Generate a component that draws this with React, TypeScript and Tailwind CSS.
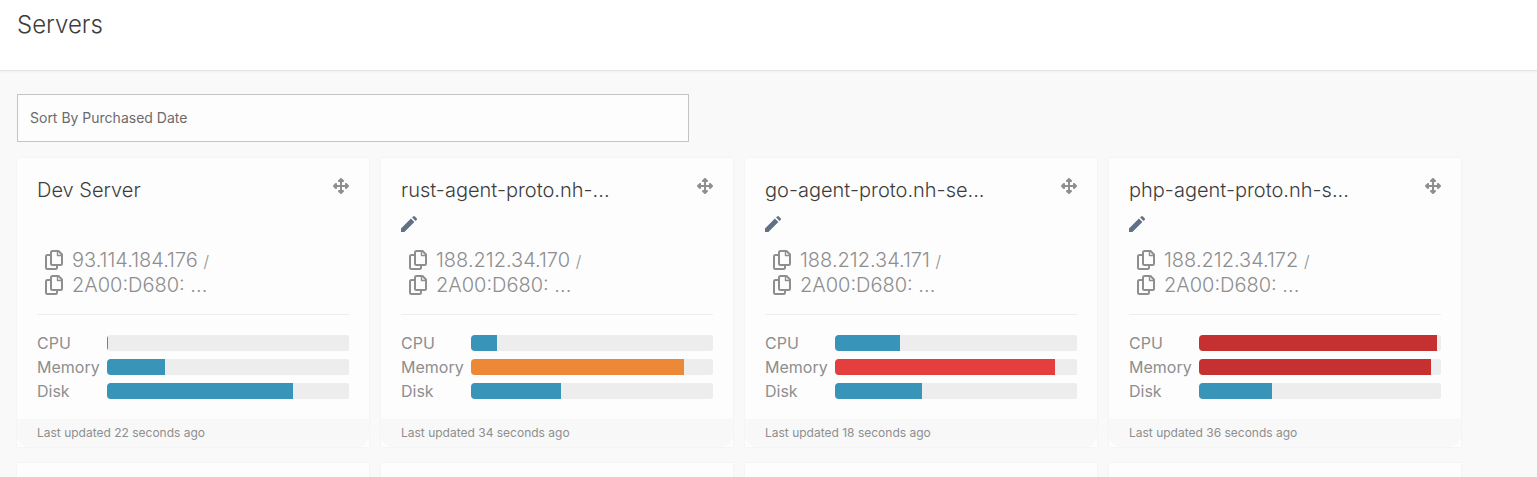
import { FaUpDownLeftRight } from "react-icons/fa6";

interface Server {
  name: string;
  editable: boolean;
  ipv4: string;
  ipv6: string;
  cpu: number;
  memory: number;
  disk: number;
  updated: number;
}

const servers: Server[] = [
  { name: "Dev Server", editable: false, ipv4: "93.114.184.176", ipv6: "2A00:D680: ...", cpu: 0.4, memory: 24, disk: 77, updated: 22 },
  { name: "rust-agent-proto.nh-...", editable: true, ipv4: "188.212.34.170", ipv6: "2A00:D680: ...", cpu: 10.7, memory: 88, disk: 37, updated: 34 },
  { name: "go-agent-proto.nh-se...", editable: true, ipv4: "188.212.34.171", ipv6: "2A00:D680: ...", cpu: 27, memory: 91, disk: 36, updated: 18 },
  { name: "php-agent-proto.nh-s...", editable: true, ipv4: "188.212.34.172", ipv6: "2A00:D680: ...", cpu: 98.4, memory: 96, disk: 30, updated: 36 },
];

function barColor(value: number) {
  if (value > 95) return "bg-[#c53030]";
  if (value > 90) return "bg-[#e53e3e]";
  if (value > 80) return "bg-[#ed8936]";
  return "bg-[#3994ba]";
}

function PencilIcon() {
  return (
    <svg viewBox="0 0 16 16" className="h-4 w-4 fill-[#5f7087]">
      <path d="M0 12.4 9.9 2.5l3.5 3.5L3.4 16H0zM11.1 1.5l1-1a1.3 1.3 0 0 1 1.8 0l1.7 1.7a1.3 1.3 0 0 1 0 1.8l-1 1z" />
    </svg>
  );
}

function CopyIcon() {
  return (
    <svg viewBox="0 0 18 20" className="h-5 w-[18px] fill-none stroke-current stroke-2 [stroke-linejoin:round]">
      <path d="M7.5 1h6L17 4.5v9A1.5 1.5 0 0 1 15.500 15h-8A1.500 1.500 0 0 1 6 13.500v-11A1.500 1.500 0 0 1 7.500 1z" />
      <path d="M12.500 1.500v4h4" strokeWidth="1.400" />
      <path d="M6 5H2.500A1.500 1.500 0 0 0 1 6.500v11A1.500 1.500 0 0 0 2.500 19h8a1.500 1.500 0 0 0 1.500-1.500V15" />
    </svg>
  );
}

function Usage({ label, value }: { label: string; value: number }) {
  return (
    <div className="flex h-6 items-center">
      <span className="w-[70px] shrink-0">{label}</span>
      <div className="h-4 flex-1 overflow-hidden rounded-l rounded-r-xs bg-[#ededed]">
        <div className={`h-full ${barColor(value)}`} style={{ width: `${value}%` }} />
      </div>
    </div>
  );
}

function Address({ value, last }: { value: string; last?: boolean }) {
  return (
    <div className="flex h-[25px] items-center">
      <button aria-label="Copy address" className="mr-[9px]">
        <CopyIcon />
      </button>
      <span className="text-xl font-light whitespace-pre">
        {value}
        {!last && <> <span className="text-base">/</span></>}
      </span>
    </div>
  );
}

function ServerCard({ server }: { server: Server }) {
  return (
    <div className="bg-[#fdfdfd] text-[#8e8e8e] shadow-[0_0_2px_rgba(0,0,0,0.06)]">
      <div className="px-5 pt-5 pb-4">
        <div className="flex items-start justify-between">
          <h2 className="text-xl leading-6 font-light text-[#3d3d3d]">{server.name}</h2>
          <button aria-label="Move card">
            <FaUpDownLeftRight className="h-4 w-4" />
          </button>
        </div>
        <div className="mt-[14px] h-4">
          {server.editable && (
            <button aria-label="Rename server" className="block">
              <PencilIcon />
            </button>
          )}
        </div>
        <div className="mt-[15px] border-b border-[#ededed] pb-[17px] pl-2">
          <Address value={server.ipv4} />
          <Address value={server.ipv6} last />
        </div>
        <div className="pt-4">
          <Usage label="CPU" value={server.cpu} />
          <Usage label="Memory" value={server.memory} />
          <Usage label="Disk" value={server.disk} />
        </div>
      </div>
      <div className="rounded-b-xl bg-[#f8f8f8] px-5 text-xs leading-7">
        Last updated {server.updated} seconds ago
      </div>
    </div>
  );
}

export default function App() {
  return (
    <div className="h-screen overflow-hidden bg-[#f9f9f9] font-['Inter',sans-serif]">
      <header className="bg-white px-[17px] pt-[9px] pb-[29px] shadow-[0_1px_0_#e0e4e8,0_2px_2px_rgba(0,0,0,0.04)]">
        <h1 className="text-2xl font-light text-[#3d3d3d]">Servers</h1>
      </header>
      <main className="px-[17px] py-6">
        <select
          aria-label="Sort servers"
          className="block h-12 w-full max-w-2xl appearance-none border border-[#c4c4c4] bg-[#fdfdfd] px-3 text-sm text-[#6b6b6b]"
        >
          <option>Sort By Purchased Date</option>
        </select>
        <div className="mt-4 grid grid-cols-[repeat(auto-fill,352px)] gap-x-3 gap-y-4">
          {servers.map((server) => (
            <ServerCard key={server.name} server={server} />
          ))}
          {servers.map((server) => (
            <div key={server.name} className="h-72 bg-[#fdfdfd] shadow-[0_0_2px_rgba(0,0,0,0.06)]" />
          ))}
        </div>
      </main>
    </div>
  );
}
